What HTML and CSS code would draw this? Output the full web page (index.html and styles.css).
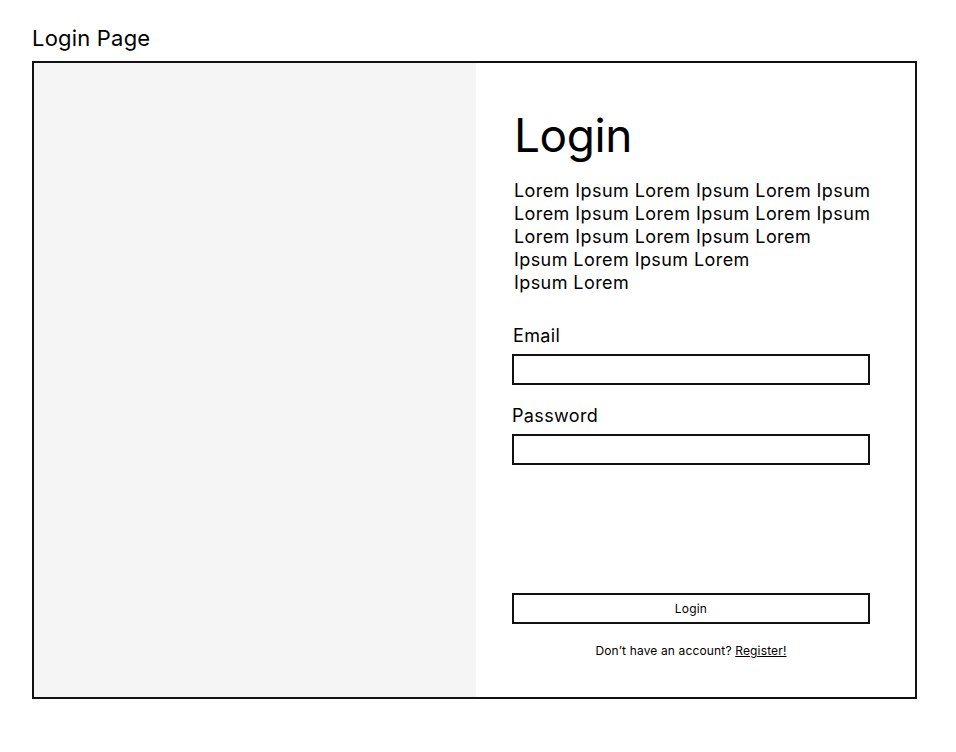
FILE: index.html
```html
<!DOCTYPE html>
<html lang="en">
<head>
<meta charset="utf-8">
<title>Login Page</title>
<link rel="stylesheet" href="styles.css">
</head>
<body>
  <h1 class="page-title">Login Page</h1>
  <div class="frame">
    <div class="side-panel"></div>
    <div class="form-panel">
      <h2 class="form-title">Login</h2>
      <p class="intro">Lorem Ipsum Lorem Ipsum Lorem Ipsum<br>Lorem Ipsum Lorem Ipsum Lorem Ipsum<br>Lorem Ipsum Lorem Ipsum Lorem<br>Ipsum Lorem Ipsum Lorem<br>Ipsum Lorem</p>
      <label class="field-label email-label" for="email">Email</label>
      <input class="field-input" id="email" type="text">
      <label class="field-label password-label" for="password">Password</label>
      <input class="field-input" id="password" type="password">
      <button class="login-button" type="button">Login</button>
      <p class="register">Don’t have an account? <a class="register-link" href="#">Register!</a></p>
    </div>
  </div>
</body>
</html>
```
FILE: styles.css
```css
* {
  box-sizing: border-box;
}

html, body {
  margin: 0;
  background: #ffffff;
}

body {
  font-family: Inter, "Noto Sans", sans-serif;
  color: #000000;
  padding: 25px 0 0 32px;
}

.page-title {
  margin: 0 0 9px 0;
  font-size: 22px;
  line-height: 27px;
  font-weight: 400;
  letter-spacing: 0.2px;
}

.frame {
  width: 885px;
  height: 638px;
  border: 2px solid #111111;
  display: grid;
  grid-template-columns: 442px 1fr;
}

.side-panel {
  background: #f5f5f5;
}

.form-panel {
  display: flex;
  flex-direction: column;
  padding: 44px 45px 0 36px;
  background: #ffffff;
}

.form-title {
  margin: 0;
  font-size: 46px;
  line-height: 56px;
  font-weight: 400;
  margin-left: 2px;
  letter-spacing: -0.4px;
}

.intro {
  margin: 16px 0 0 2px;
  font-size: 18px;
  line-height: 23px;
  letter-spacing: 0.42px;
  white-space: nowrap;
}

.field-label {
  font-size: 18px;
  line-height: 22px;
  margin-left: 1px;
  letter-spacing: 0.35px;
}

.email-label {
  margin-top: 31px;
}

.password-label {
  margin-top: 20px;
  margin-left: 0;
}

.field-input {
  margin: 7px 0 0 0;
  width: 358px;
  height: 31px;
  border: 2px solid #111111;
  background: #ffffff;
  border-radius: 0;
  padding: 0 6px;
  font: inherit;
  outline: none;
}

.login-button {
  margin-top: 128px;
  width: 358px;
  height: 31px;
  border: 2px solid #111111;
  background: #ffffff;
  border-radius: 0;
  font-family: inherit;
  font-size: 12px;
  letter-spacing: 0.2px;
  color: #000000;
  padding: 0;
  cursor: pointer;
}

.register {
  margin: 19px 0 0 0;
  width: 358px;
  text-align: center;
  font-size: 12px;
  line-height: 16px;
  letter-spacing: 0.15px;
  white-space: nowrap;
}

.register-link {
  color: inherit;
  text-decoration: underline;
}
```
